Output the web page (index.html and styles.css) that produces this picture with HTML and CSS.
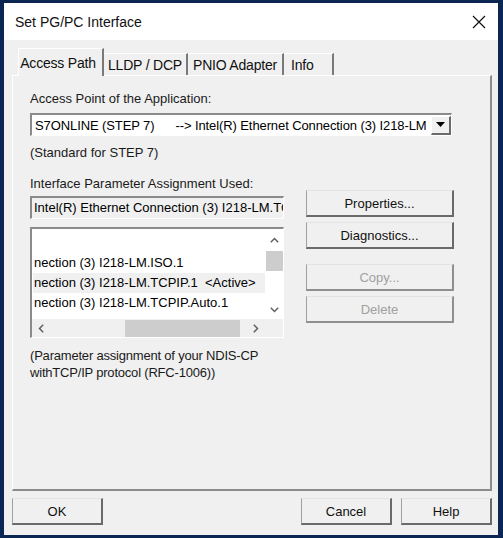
FILE: index.html
```html
<!DOCTYPE html>
<html lang="en">
<head>
    <meta charset="UTF-8">
    <title>Set PG/PC Interface</title>
    <link rel="stylesheet" href="styles.css">
</head>
<body>
    <div class="window">
        <div class="titlebar">
            <span class="title">Set PG/PC Interface</span>
            <svg class="close" width="14" height="14" viewBox="0 0 14 14"><path d="M1 1 L13 13 M13 1 L1 13" stroke="#111" stroke-width="1.2"/></svg>
        </div>
        <div class="client">
            <div class="tabs">
                <div class="tab active">Access Path</div>
                <div class="tab lldp">LLDP / DCP</div>
                <div class="tab pnio">PNIO Adapter</div>
                <div class="tab info">Info</div>
            </div>
            <div class="panel">
                <div class="label">Access Point of the Application:</div>
                <div class="combo">
                    <span class="combo-text">S7ONLINE (STEP 7)&nbsp;&nbsp;&nbsp;&nbsp;&nbsp;&nbsp;--&gt; Intel(R) Ethernet Connection (3) I218-LM</span>
                    <span class="combo-btn"><svg width="9" height="5" viewBox="0 0 9 5"><path d="M0 0 H9 L4.5 5 Z" fill="#000"/></svg></span>
                </div>
                <div class="label hint">(Standard for STEP 7)</div>
                <div class="label">Interface Parameter Assignment Used:</div>
                <div class="assign">
                    <div class="left">
                        <div class="textbox">Intel(R) Ethernet Connection (3) I218-LM.TC</div>
                        <div class="listbox">
                            <div class="list-area">
                                <div class="items">
                                    <div class="item"></div>
                                    <div class="item">nection (3) I218-LM.ISO.1</div>
                                    <div class="item selected">nection (3) I218-LM.TCPIP.1&nbsp;&nbsp;&lt;Active&gt;</div>
                                    <div class="item">nection (3) I218-LM.TCPIP.Auto.1</div>
                                </div>
                                <div class="vscroll">
                                    <span class="arrow"><svg width="9" height="6" viewBox="0 0 9 6"><path d="M0.8 5.2 L4.5 1.5 L8.2 5.2" fill="none" stroke="#606060" stroke-width="1.5"/></svg></span>
                                    <span class="vthumb"></span>
                                    <span class="vspace"></span>
                                    <span class="arrow"><svg width="9" height="6" viewBox="0 0 9 6"><path d="M0.8 0.8 L4.5 4.5 L8.2 0.8" fill="none" stroke="#606060" stroke-width="1.5"/></svg></span>
                                </div>
                            </div>
                            <div class="hbar">
                                <div class="hscroll">
                                    <span class="harrow"><svg width="6" height="9" viewBox="0 0 6 9"><path d="M5.2 0.8 L1.5 4.5 L5.2 8.2" fill="none" stroke="#606060" stroke-width="1.5"/></svg></span>
                                    <span class="htrack"><span class="hthumb"></span></span>
                                    <span class="harrow"><svg width="6" height="9" viewBox="0 0 6 9"><path d="M0.8 0.8 L4.5 4.5 L0.8 8.2" fill="none" stroke="#606060" stroke-width="1.5"/></svg></span>
                                </div>
                                <div class="corner"></div>
                            </div>
                        </div>
                    </div>
                    <div class="right">
                        <button class="btn">Properties...</button>
                        <button class="btn">Diagnostics...</button>
                        <button class="btn disabled gap">Copy...</button>
                        <button class="btn disabled">Delete</button>
                    </div>
                </div>
                <div class="note">(Parameter assignment of your NDIS-CP<br>withTCP/IP protocol (RFC-1006))</div>
            </div>
            <div class="footer">
                <button class="btn wide">OK</button>
                <div class="footer-right">
                    <button class="btn wide">Cancel</button>
                    <button class="btn wide">Help</button>
                </div>
            </div>
        </div>
    </div>
</body>
</html>
```

FILE: styles.css
```css
body {
    margin: 0;
    background-color: #0c2654;
    font-family: "Liberation Sans", Arial, sans-serif;
    font-size: 12px;
    color: #000000;
}
.window {
    margin: 3px 0 0 4px;
    width: 494px;
    height: 532px;
    background-color: #f0f0f0;
    display: flex;
    flex-direction: column;
}
.titlebar {
    height: 37px;
    background-color: #ffffff;
    display: flex;
    align-items: center;
    justify-content: space-between;
    padding: 0 11px 0 11px;
}
.title {
    font-size: 14px;
    color: #111111;
}
.close {
    margin-right: 1px;
}
.client {
    padding: 7px 6px 0 8px;
}
.tabs {
    display: flex;
    align-items: flex-end;
    height: 28px;
    padding-left: 6px;
}
.tab {
    height: 22px;
    line-height: 22px;
    text-align: center;
    border-right: 2px solid #7a7a7a;
    border-top: 1px solid #ffffff;
    box-sizing: border-box;
    font-size: 14px;
    letter-spacing: -0.2px;
    color: #111111;
}
.tab.active {
    width: 86px;
    height: 28px;
    line-height: 28px;
    padding-right: 5px;
    border-left: 1px solid #ffffff;
    background-color: #f0f0f0;
    position: relative;
    top: 1px;
}
.tab.lldp {
    width: 84px;
}
.tab.pnio {
    width: 96px;
}
.tab.info {
    width: 50px;
    text-align: left;
    padding-left: 7px;
}
.panel {
    height: 416px;
    box-sizing: border-box;
    border-left: 1px solid #ffffff;
    border-top: 1px solid #ffffff;
    border-right: 2px solid #8c8c8c;
    border-bottom: 2px solid #8c8c8c;
    padding: 14px 0 0 17px;
}
.label {
    height: 17px;
    line-height: 17px;
    font-size: 13px;
    color: #1a1a1a;
}
.combo {
    margin-top: 6px;
    width: 422px;
    height: 23px;
    box-sizing: border-box;
    border-top: 2px solid #8a8a8a;
    border-left: 2px solid #8a8a8a;
    border-right: 1px solid #ffffff;
    border-bottom: 1px solid #ffffff;
    background-color: #ffffff;
    display: flex;
    align-items: center;
    justify-content: space-between;
}
.combo-text {
    padding-left: 3px;
    font-size: 13px;
    letter-spacing: -0.1px;
    white-space: pre;
    overflow: hidden;
}
.combo-btn {
    width: 20px;
    height: 19px;
    box-sizing: border-box;
    background-color: #f0f0f0;
    border-top: 1px solid #ffffff;
    border-left: 1px solid #ffffff;
    border-right: 2px solid #6a6a6a;
    border-bottom: 2px solid #6a6a6a;
    display: flex;
    align-items: center;
    justify-content: center;
    flex-shrink: 0;
}
.hint {
    margin-top: 8px;
    margin-bottom: 14px;
}
.assign {
    display: flex;
    gap: 22px;
    margin-top: 4px;
}
.left {
    width: 254px;
}
.textbox {
    height: 23px;
    line-height: 20px;
    box-sizing: border-box;
    border-top: 2px solid #8a8a8a;
    border-left: 2px solid #8a8a8a;
    border-right: 1px solid #ffffff;
    border-bottom: 1px solid #ffffff;
    padding-left: 2px;
    font-size: 13px;
    white-space: nowrap;
    overflow: hidden;
    background-color: #f0f0f0;
}
.listbox {
    margin-top: 8px;
    height: 111px;
    box-sizing: border-box;
    border-top: 2px solid #8a8a8a;
    border-left: 2px solid #8a8a8a;
    border-right: 1px solid #ffffff;
    border-bottom: 1px solid #ffffff;
    background-color: #ffffff;
    display: flex;
    flex-direction: column;
}
.list-area {
    flex: 1;
    display: flex;
}
.items {
    flex: 1;
    padding: 4px 0 0 1px;
    overflow: hidden;
}
.item {
    height: 20px;
    line-height: 20px;
    font-size: 13px;
    white-space: nowrap;
    overflow: hidden;
    padding-left: 1px;
}
.item.selected {
    background-color: #f0f0f0;
}
.vscroll {
    width: 18px;
    display: flex;
    flex-direction: column;
    align-items: center;
    padding: 2px 0 1px 0;
}
.arrow {
    height: 17px;
    display: flex;
    align-items: center;
    justify-content: center;
}
.vthumb {
    margin-top: 3px;
    width: 17px;
    height: 20px;
    background-color: #cdcdcd;
}
.vspace {
    flex: 1;
}
.hbar {
    height: 18px;
    display: flex;
}
.hscroll {
    flex: 1;
    display: flex;
    align-items: center;
    background-color: #f0f0f0;
}
.harrow {
    width: 18px;
    display: flex;
    align-items: center;
    justify-content: center;
}
.htrack {
    flex: 1;
    height: 17px;
    position: relative;
}
.hthumb {
    position: absolute;
    left: 75px;
    width: 115px;
    height: 17px;
    background-color: #cdcdcd;
}
.corner {
    width: 18px;
    background-color: #f0f0f0;
}
.right {
    width: 148px;
    display: flex;
    flex-direction: column;
    gap: 5px;
    margin-top: -6px;
}
.btn {
    height: 27px;
    box-sizing: border-box;
    background-color: #f0f0f0;
    border-top: 1px solid #e3e3e3;
    border-left: 1px solid #a0a0a0;
    border-right: 2px solid #6a6a6a;
    border-bottom: 2px solid #6a6a6a;
    font-family: "Liberation Sans", Arial, sans-serif;
    font-size: 13px;
    color: #111111;
    padding: 0;
}
.btn.gap {
    margin-top: 10px;
}
.btn.disabled {
    color: #a0a0a0;
    border-right-color: #8f8f8f;
    border-bottom-color: #8f8f8f;
}
.note {
    margin-top: 9px;
    line-height: 17px;
    font-size: 13px;
    letter-spacing: -0.2px;
    color: #1a1a1a;
}
.footer {
    display: flex;
    justify-content: space-between;
    margin-top: 7px;
}
.footer-right {
    display: flex;
    gap: 9px;
}
.btn.wide {
    width: 91px;
}
```
